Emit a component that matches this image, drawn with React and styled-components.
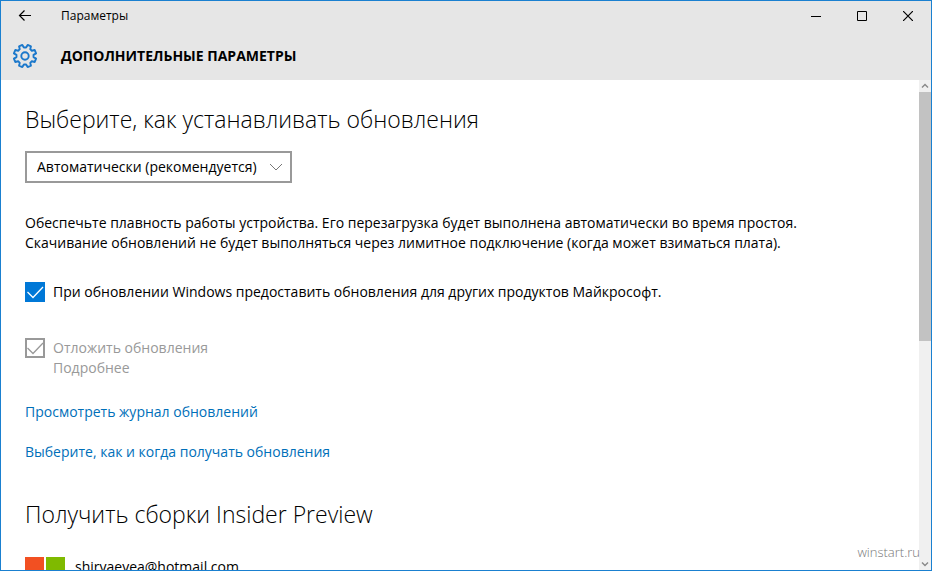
import React, { useState } from 'react';
import styled, { createGlobalStyle } from 'styled-components';

const GlobalStyle = createGlobalStyle`
    * {
        box-sizing: border-box;
    }
    body {
        margin: 0;
        background: #fff;
        color: #000;
        font-family: 'Open Sans', 'Noto Sans', sans-serif;
        font-size: 14px;
        line-height: 20px;
    }
    button, select {
        font: inherit;
        color: inherit;
    }
`
const Window = styled.div`
    display: flex;
    flex-direction: column;
    height: 100vh;
    border: 1px solid #1a80d0;
    background: #fff;
    overflow: hidden;
`
const Header = styled.header`
    flex: none;
    background: #e6e6e6;
`
const TitleBar = styled.div`
    display: flex;
    align-items: center;
    height: 30px;
    font-size: 12px;
`
const WindowButton = styled.button`
    display: flex;
    align-items: center;
    justify-content: center;
    width: ${props => props.$wide ? '48px' : '46px'};
    height: 30px;
    padding: 0;
    border: 0;
    background: transparent;

    &:hover {
        background: #d4d4d4;
    }
`
const WindowTitle = styled.span`
    flex: 1;
    padding-left: 12px;
`
const PageBar = styled.div`
    display: flex;
    align-items: center;
    height: 49px;
    padding-left: 11px;

    h1 {
        margin: 0 0 0 23px;
        font-size: 14px;
        font-weight: 700;
        line-height: 20px;
    }
`
const Body = styled.div`
    display: flex;
    flex: 1;
    min-height: 0;
`
const Content = styled.main`
    flex: 1;
    min-width: 0;
    padding: 23px 24px 0;
    overflow: hidden;
`
const Heading = styled.h2`
    margin: 0;
    font-size: 23px;
    font-weight: 300;
    line-height: 32px;
`
const SelectBox = styled.div`
    display: grid;
    width: fit-content;
    margin-top: 16px;
    align-items: center;

    select, svg {
        grid-area: 1 / 1;
    }
    select {
        appearance: none;
        width: 267px;
        height: 32px;
        padding: 0 30px 0 10px;
        border: 2px solid #999;
        border-radius: 0;
        background: #fff;
    }
    svg {
        justify-self: end;
        margin-right: 9px;
        pointer-events: none;
    }
`
const Text = styled.p`
    max-width: 800px;
    margin: 30px 0 0;
`
const CheckRow = styled.label`
    display: grid;
    grid-template-columns: 20px auto;
    column-gap: 8px;
    justify-content: start;
    margin-top: ${props => props.$top};
    color: ${props => props.$disabled ? '#999' : '#000'};

    input, svg {
        grid-area: 1 / 1;
    }
    input {
        appearance: none;
        width: 20px;
        height: 20px;
        margin: 0;
        border: 2px solid #999;
        background: #fff;
    }
    input:checked:enabled {
        border-color: #0078d7;
        background: #0078d7;
    }
    svg {
        color: ${props => props.$disabled ? '#999' : '#fff'};
        pointer-events: none;
    }
    small {
        grid-column: 2;
        font-size: 14px;
    }
`
const Link = styled.a`
    display: block;
    width: fit-content;
    margin-top: ${props => props.$top};
    color: #006fb9;
    text-decoration: none;
`
const Section = styled.section`
    margin-top: 36px;
`
const Account = styled.div`
    display: flex;
    gap: 10px;
    margin-top: 27px;
`
const ScrollBar = styled.div`
    display: flex;
    flex-direction: column;
    width: 12px;
    background: #f0f0f0;
`
const ScrollButton = styled.button`
    display: flex;
    align-items: center;
    justify-content: center;
    height: 12px;
    padding: 0;
    border: 0;
    background: transparent;
`
const Track = styled.div`
    flex: 1;
`
const Thumb = styled.div`
    height: 53.5%;
    background: #c2c2c2;
`
const Watermark = styled.span`
    position: absolute;
    right: 12px;
    bottom: 9px;
    color: #777;
    font-size: 13px;
    font-weight: 300;
`

const gearPath = () => {
    const points = [];
    for (let i = 0; i < 8; i++) {
        const middle = 22.5 + i * 45;
        [[-15, 8.6], [-9, 11.4], [9, 11.4], [15, 8.6]].forEach(([offset, radius]) => {
            const angle = (middle + offset) * Math.PI / 180;
            points.push(`${(13 + radius * Math.cos(angle)).toFixed(2)} ${(13 + radius * Math.sin(angle)).toFixed(2)}`);
        });
    }
    return `M${points.join('L')}Z`;
}

const Gear = () => (
    <svg width="26" height="26" fill="none" stroke="#1b78cb" strokeWidth="1.9" strokeLinejoin="round">
        <path d={gearPath()} />
        <circle cx="13" cy="13" r="3.7" />
    </svg>
)

const Check = () => (
    <svg width="20" height="20" fill="none" stroke="currentColor" strokeWidth="1.3">
        <path d="M2.5 10L8 15.5L18 5" />
    </svg>
)

const Chevron = ({ up }) => (
    <svg width="8" height="6" fill="none" stroke="#888" strokeWidth="1.4">
        <path d={up ? 'M1 4.5L4 1.5L7 4.5' : 'M1 1.5L4 4.5L7 1.5'} />
    </svg>
)

const CheckBox = ({ label, note, top, disabled }) => {
    const [checked, setChecked] = useState(true);

    return (
        <CheckRow $top={top} $disabled={disabled}>
            <input
                type="checkbox"
                checked={checked}
                disabled={disabled}
                onChange={() => setChecked(!checked)}
            />
            {checked ? <Check /> : null}
            <span>{label}</span>
            {note ? <small>{note}</small> : null}
        </CheckRow>
    )
}

const App = () => {
    return (
        <Window>
            <GlobalStyle />
            <Header>
                <TitleBar>
                    <WindowButton $wide aria-label="Назад">
                        <svg width="14" height="12" fill="none" stroke="#000" strokeWidth="1.2">
                            <path d="M13 5.5H1.5M6.5 .5L1.5 5.5L6.5 10.5" />
                        </svg>
                    </WindowButton>
                    <WindowTitle>Параметры</WindowTitle>
                    <WindowButton aria-label="Свернуть">
                        <svg width="10" height="10"><path d="M0 5.5H10" stroke="#000" /></svg>
                    </WindowButton>
                    <WindowButton aria-label="Развернуть">
                        <svg width="10" height="10"><path d="M.5 .5H9.5V9.5H.5Z" stroke="#000" fill="none" /></svg>
                    </WindowButton>
                    <WindowButton aria-label="Закрыть">
                        <svg width="10" height="10"><path d="M0 0L10 10M10 0L0 10" stroke="#000" strokeWidth="1.2" /></svg>
                    </WindowButton>
                </TitleBar>
                <PageBar>
                    <Gear />
                    <h1>ДОПОЛНИТЕЛЬНЫЕ ПАРАМЕТРЫ</h1>
                </PageBar>
            </Header>
            <Body>
                <Content>
                    <Heading>Выберите, как устанавливать обновления</Heading>
                    <SelectBox>
                        <select aria-label="Выберите, как устанавливать обновления">
                            <option>Автоматически (рекомендуется)</option>
                        </select>
                        <svg width="14" height="8" fill="none" stroke="#777">
                            <path d="M1 1L7 7L13 1" />
                        </svg>
                    </SelectBox>
                    <Text>
                        Обеспечьте плавность работы устройства. Его перезагрузка будет выполнена автоматически во время простоя. Скачивание обновлений не будет выполняться через лимитное подключение (когда может взиматься плата).
                    </Text>
                    <CheckBox
                        top="29px"
                        label="При обновлении Windows предоставить обновления для других продуктов Майкрософт."
                    />
                    <CheckBox top="36px" label="Отложить обновления" note="Подробнее" disabled />
                    <Link href="#history" $top="24px">Просмотреть журнал обновлений</Link>
                    <Link href="#delivery" $top="20px">Выберите, как и когда получать обновления</Link>
                    <Section>
                        <Heading>Получить сборки Insider Preview</Heading>
                        <Account>
                            <svg width="40" height="40">
                                <rect width="19" height="19" fill="#f25022" />
                                <rect x="21" width="19" height="19" fill="#7fba00" />
                                <rect y="21" width="19" height="19" fill="#00a4ef" />
                                <rect x="21" y="21" width="19" height="19" fill="#ffb900" />
                            </svg>
                            <span>shiryaevea@hotmail.com</span>
                        </Account>
                    </Section>
                </Content>
                <ScrollBar>
                    <ScrollButton aria-label="Вверх"><Chevron up /></ScrollButton>
                    <Track><Thumb /></Track>
                    <ScrollButton aria-label="Вниз"><Chevron /></ScrollButton>
                </ScrollBar>
            </Body>
            <Watermark>winstart.ru</Watermark>
        </Window>
    )
}

export default App;
